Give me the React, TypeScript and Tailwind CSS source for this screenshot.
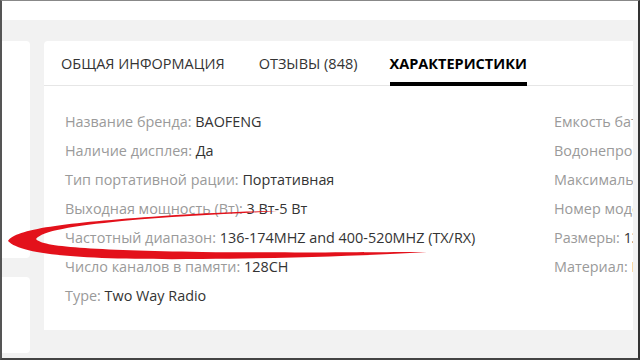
import React from "react";

const left: [string, string][] = [
  ["Название бренда:", "BAOFENG"],
  ["Наличие дисплея:", "Да"],
  ["Тип портативной рации:", "Портативная"],
  ["Выходная мощность (Вт):", "3 Вт-5 Вт"],
  ["Частотный диапазон:", "136-174MHZ and 400-520MHZ (TX/RX)"],
  ["Число каналов в памяти:", "128CH"],
  ["Type:", "Two Way Radio"],
];

const right: [string, string][] = [
  ["Емкость батареи:", "1800mAh"],
  ["Водонепроницаемый:", "Нет"],
  ["Максимальная дальность:", "5 км"],
  ["Номер модели:", "UV-5R"],
  ["Размеры:", "135*60*35mm"],
  ["Материал:", "Пластик"],
];

function Row({ k, v }: { k: string; v: string }) {
  return (
    <div className="whitespace-nowrap leading-[29px] text-[14.4px]">
      <span className="text-[#9a9a9a]">{k} </span>
      <span className="text-[#333]">{v}</span>
    </div>
  );
}

export default function App() {
  return (
    <div
      className="relative w-[640px] h-[360px] overflow-hidden bg-[#f2f2f2] border-l-2 border-t border-r-2 border-b-2 border-l-[#555] border-t-[#888] border-r-[#333] border-b-[#444] flex flex-col"
      style={{ fontFamily: '"Open Sans", "Noto Sans", sans-serif' }}
    >
      <div className="h-[19px] bg-white shrink-0" />
      <div className="flex flex-1 pt-[21px] pr-[5px]">
        <div className="w-[28px] flex flex-col gap-[19px] shrink-0">
          <div className="h-[217px] bg-white rounded-r-[4px]" />
          <div className="h-[76px] bg-white rounded-r-[4px]" />
        </div>
        <div className="ml-[14px] flex-1 h-[289px] bg-white rounded-tl-[4px] overflow-hidden">
          <div className="flex h-[45px] border-b border-[#e6e6e6] pl-[17px] text-[14.5px] text-[#333]">
            <div className="h-[45px] pt-[4px] border-b-4 border-transparent flex items-center">ОБЩАЯ ИНФОРМАЦИЯ</div>
            <div className="h-[45px] pt-[4px] border-b-4 border-transparent flex items-center ml-[34px]">ОТЗЫВЫ (848)</div>
            <div className="h-[45px] pt-[4px] border-b-4 border-black flex items-center ml-[32px] font-bold text-black">ХАРАКТЕРИСТИКИ</div>
          </div>
          <div className="flex pl-[21px] pt-[21px]">
            <div className="w-[489px] shrink-0">
              {left.map(([k, v]) => (
                <Row key={k} k={k} v={v} />
              ))}
            </div>
            <div className="shrink-0">
              {right.map(([k, v]) => (
                <Row key={k} k={k} v={v} />
              ))}
            </div>
          </div>
        </div>
      </div>
      <svg
        className="absolute left-0 top-0 pointer-events-none"
        width="640"
        height="360"
        viewBox="0 0 640 360"
      >
        <path
          d="M 6 240 C 14 228, 60 222, 160 215 C 210 212, 250 210, 275 210 C 230 213, 170 215, 120 220 C 70 225, 40 230, 34 238 C 40 246, 90 249, 200 251 C 300 252, 380 251, 425 251 C 380 254, 300 257, 200 258 C 90 259, 20 255, 6 240 Z"
          fill="#e3111b"
        />
      </svg>
    </div>
  );
}
